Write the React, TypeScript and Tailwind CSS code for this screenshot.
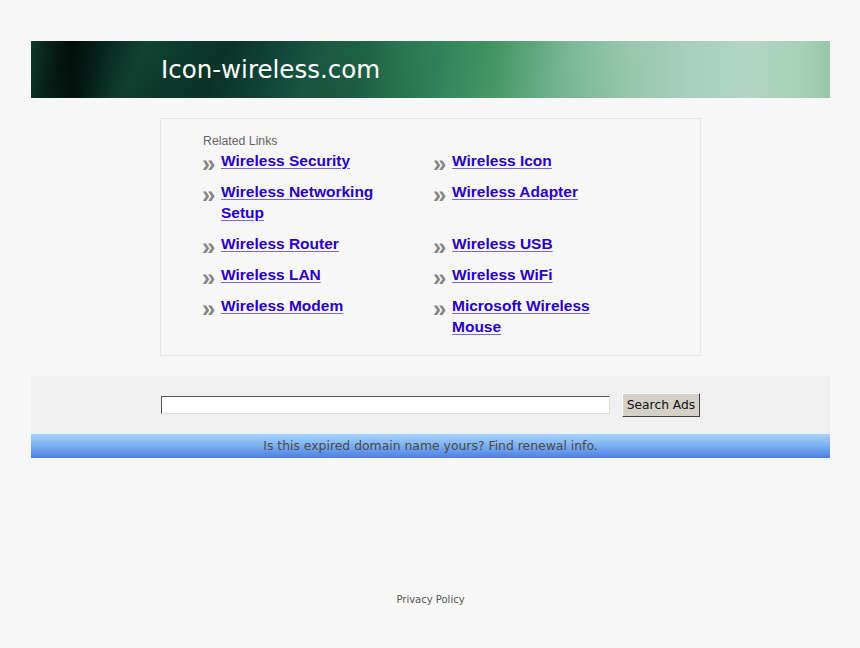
import React from "react";

const col1 = [
  "Wireless Security",
  "Wireless Networking Setup",
  "Wireless Router",
  "Wireless LAN",
  "Wireless Modem",
];
const col2 = [
  "Wireless Icon",
  "Wireless Adapter",
  "Wireless USB",
  "Wireless WiFi",
  "Microsoft Wireless Mouse",
];

function LinkItem({ text }: { text: string }) {
  return (
    <div className="flex items-start">
      <span className="relative top-[3px] w-[19px] h-[21px] shrink-0 overflow-visible text-[#858585] font-bold text-[24px] leading-[21px] font-['Liberation_Sans',Arial,sans-serif]">
        »
      </span>
      <a
        href="#"
        className="w-[175px] text-[#2a00c8] underline decoration-[#7a66e0] underline-offset-2 font-bold text-[15.5px] leading-[21px] font-['Liberation_Sans',Arial,sans-serif]"
      >
        {text}
      </a>
    </div>
  );
}

export default function App() {
  const rows = col1.map((c, i) => [c, col2[i]]);
  return (
    <div className="min-h-[648px] bg-[#f7f7f7] pt-[41px] font-['DejaVu_Sans',sans-serif]">
      <div className="ml-[31px] w-[799px]">
        <div className="relative h-[57px] flex items-center pl-[130px] pt-[2px] overflow-hidden bg-[linear-gradient(90deg,#0d3b2c_0%,#03140f_5%,#082820_10%,#0c3a2c_18%,#0f4235_28%,#144b3a_36%,#1f6246_42%,#2d7a56_47%,#3a8b60_52%,#459664_58%,#58a477_63%,#78b795_69%,#96c6ad_75%,#a6cfbd_82%,#b2d6c5_90%,#a8d1b8_96%,#98c7a6_100%)]">
          <div className="absolute inset-0 bg-[linear-gradient(115deg,transparent_0%,rgba(0,0,0,0.3)_5%,transparent_9%,rgba(40,130,90,0.22)_14%,transparent_19%,rgba(0,0,0,0.2)_24%,transparent_30%,rgba(50,140,100,0.2)_36%,transparent_42%,rgba(20,100,60,0.18)_50%,transparent_57%,rgba(255,255,255,0.08)_66%,transparent_76%)]" />
          <span className="relative text-white text-[24.5px] leading-none font-['DejaVu_Sans',sans-serif]">
            Icon-wireless.com
          </span>
        </div>

        <div className="ml-[129px] mt-[20px] w-[541px] h-[238px] border border-[#e6e6e6] bg-[#f7f7f7] pl-[42px] pt-[15px]">
          <div className="text-[12.3px] leading-[14px] text-[#666] font-['Liberation_Sans',Arial,sans-serif]">
            Related Links
          </div>
          <div className="mt-[2px] flex flex-col gap-[10px]">
            {rows.map((r, i) => (
              <div key={i} className="grid grid-cols-[231px_231px] -ml-px">
                <LinkItem text={r[0]} />
                <LinkItem text={r[1]} />
              </div>
            ))}
          </div>
        </div>

        <div className="mt-[20px] h-[58px] bg-[#f0f0f0] flex items-center pl-[130px]">
          <input
            type="text"
            className="w-[449px] h-[18px] bg-white border border-t-[#555] border-l-[#555] border-b-[#ddd] border-r-[#ddd] outline-none"
          />
          <button className="ml-[12px] w-[78px] h-[24px] bg-[#d4d0c8] text-[12.3px] text-[#111] border border-t-[#fff] border-l-[#fff] border-b-[#404040] border-r-[#404040] font-['DejaVu_Sans',sans-serif]">
            Search Ads
          </button>
        </div>

        <div className="h-[24px] bg-[linear-gradient(180deg,#a6d3fc_0%,#7aaef0_50%,#4c7ee0_100%)] flex items-center justify-center text-[12.4px] text-[#4a4a4a] font-['DejaVu_Sans',sans-serif]">
          Is this expired domain name yours? Find renewal info.
        </div>

        <div className="mt-[134px] text-center text-[10px] text-[#555] font-['DejaVu_Sans',sans-serif]">
          Privacy Policy
        </div>
      </div>
    </div>
  );
}
